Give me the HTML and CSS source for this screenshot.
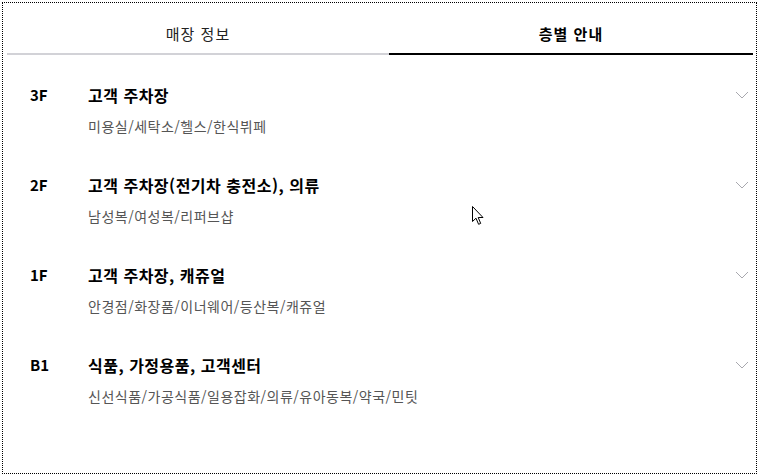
FILE: index.html
```html
<!DOCTYPE html>
<html lang="ko">
<head>
<meta charset="utf-8">
<title>층별 안내</title>
<link rel="stylesheet" href="styles.css">
</head>
<body>
<div class="frame">
  <div class="tabs">
    <div class="tab tab-left">매장 정보</div>
    <div class="tab tab-right active">층별 안내</div>
  </div>
  <ul class="floors">
    <li class="floor">
      <span class="label">3F</span>
      <div class="info">
        <div class="title">고객 주차장</div>
        <div class="sub">미용실/세탁소/헬스/한식뷔페</div>
      </div>
      <svg class="chev" width="14" height="8" viewBox="0 0 14 8"><polyline points="1,1 7,7 13,1" fill="none" stroke="#a8a8ae" stroke-width="1"/></svg>
    </li>
    <li class="floor">
      <span class="label">2F</span>
      <div class="info">
        <div class="title">고객 주차장(전기차 충전소), 의류</div>
        <div class="sub">남성복/여성복/리퍼브샵</div>
      </div>
      <svg class="chev" width="14" height="8" viewBox="0 0 14 8"><polyline points="1,1 7,7 13,1" fill="none" stroke="#a8a8ae" stroke-width="1"/></svg>
    </li>
    <li class="floor">
      <span class="label">1F</span>
      <div class="info">
        <div class="title">고객 주차장, 캐쥬얼</div>
        <div class="sub">안경점/화장품/이너웨어/등산복/캐쥬얼</div>
      </div>
      <svg class="chev" width="14" height="8" viewBox="0 0 14 8"><polyline points="1,1 7,7 13,1" fill="none" stroke="#a8a8ae" stroke-width="1"/></svg>
    </li>
    <li class="floor">
      <span class="label">B1</span>
      <div class="info">
        <div class="title">식품, 가정용품, 고객센터</div>
        <div class="sub">신선식품/가공식품/일용잡화/의류/유아동복/약국/민팃</div>
      </div>
      <svg class="chev" width="14" height="8" viewBox="0 0 14 8"><polyline points="1,1 7,7 13,1" fill="none" stroke="#a8a8ae" stroke-width="1"/></svg>
    </li>
  </ul>
  <svg class="cursor" width="13" height="20" viewBox="0 0 13 20"><path d="M0.5,0.5 L0.5,15.5 L4,12.2 L6.6,18.3 L8.7,17.4 L6.2,11.5 L11,11.5 Z" fill="#fff" stroke="#000" stroke-width="1" stroke-linejoin="miter"/></svg>
</div>
</body>
</html>
```
FILE: styles.css
```css
html, body {
  margin: 0;
  padding: 0;
  background: #fff;
}
body {
  padding: 2px 0 0 2px;
  font-family: "Noto Sans CJK KR", "Noto Sans", sans-serif;
  color: #111;
}
.frame {
  position: relative;
  box-sizing: border-box;
  width: 755px;
  height: 472px;
  border: 1px dotted #000;
  padding: 0 3px 0 4px;
}
.tabs {
  display: flex;
  height: 52px;
}
.tab {
  box-sizing: border-box;
  height: 52px;
  display: flex;
  align-items: center;
  justify-content: center;
  font-size: 15px;
  letter-spacing: 1px;
  color: #222;
  border-bottom: 2px solid #d2d2d7;
  padding-top: 10px;
}
.tab-left { width: 382px; }
.tab-right { flex: 1; }
.tab.active {
  font-weight: 700;
  color: #000;
  border-bottom-color: #000;
}
.floors {
  list-style: none;
  margin: 0;
  padding: 0;
}
.floor {
  display: flex;
  align-items: flex-start;
  height: 90px;
  box-sizing: border-box;
  padding: 28px 4px 0 23px;
}
.label {
  width: 58px;
  font-size: 15px;
  font-weight: 700;
  line-height: 24px;
  color: #000;
}
.info {
  flex: 1;
}
.title {
  font-size: 16px;
  letter-spacing: 0.5px;
  font-weight: 700;
  line-height: 24px;
  color: #000;
}
.sub {
  margin-top: 9px;
  font-size: 14px;
  letter-spacing: 0.5px;
  line-height: 20px;
  color: #555;
}
.chev {
  margin-top: 8px;
}
.cursor {
  position: absolute;
  left: 469px;
  top: 203px;
}
```
